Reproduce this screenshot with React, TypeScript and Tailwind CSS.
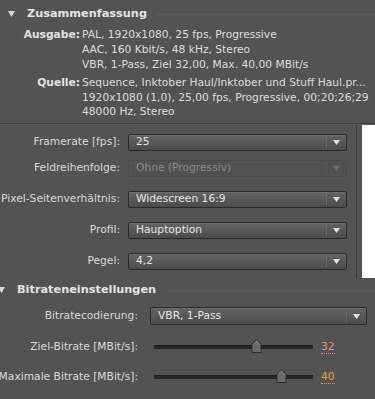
import React from "react";

const font = "font-['Lucida_Grande','DejaVu_Sans',sans-serif]";

function SectionHeader({ title, indent }: { title: string; indent: string }) {
  return (
    <div className={`flex items-center h-[14px] ${indent}`}>
      <svg width="7" height="6" viewBox="0 0 7 6" className="shrink-0">
        <path d="M0 0 H7 L3.5 6 Z" fill="#d6d6d6" />
      </svg>
      <span className="ml-[12px] text-[11.3px] font-bold text-[#e4e4e4] whitespace-nowrap">{title}</span>
      <div className="ml-[10px] flex-1 h-px bg-[#3c3c3c] border-b border-[#5e5e5e]" />
    </div>
  );
}

function Select({ value, disabled, className }: { value: string; disabled?: boolean; className: string }) {
  return (
    <div
      className={`flex items-center rounded-[2px] border ${
        disabled
          ? "border-[#4a4a4a] bg-[#515151] text-[#8c8c8c]"
          : "border-[#2a2a2a] bg-gradient-to-b from-[#646464] to-[#4c4c4c] text-[#e6e6e6] shadow-[inset_0_1px_0_#6e6e6e]"
      } ${className}`}
    >
      <span className="flex-1 pl-[7px] whitespace-nowrap">{value}</span>
      <div className={`w-px h-[11px] ${disabled ? "bg-[#5a5a5a]" : "bg-[#3a3a3a] border-r border-[#6a6a6a]"}`} />
      <svg width="7" height="5" viewBox="0 0 7 5" className="mx-[6px]">
        <path d="M0 0 H7 L3.5 5 Z" fill={disabled ? "#6e6e6e" : "#e4e4e4"} />
      </svg>
    </div>
  );
}

function Row({ label, children, labelWidth }: { label: string; children: React.ReactNode; labelWidth: string }) {
  return (
    <div className="flex items-center">
      <div className={`${labelWidth} shrink-0 text-right whitespace-nowrap text-[#dadada] flex justify-end`}>{label}</div>
      {children}
    </div>
  );
}

function Slider({ pos, value }: { pos: number; value: string }) {
  return (
    <div className="flex items-center ml-[16px]">
      <div className="relative w-[159px] h-[4px] bg-[#262626] border-t border-[#1c1c1c]">
        <svg
          width="11"
          height="15"
          viewBox="0 0 11 15"
          className="absolute top-[-7px]"
          style={{ left: pos - 5 }}
        >
          <path d="M1 5 L5.5 0.8 L10 5 V13.5 H1 Z" fill="#6a6a6a" stroke="#2c2c2c" />
          <path d="M2 5.5 L5.5 2 L9 5.5" fill="none" stroke="#888" strokeWidth="0.8" />
        </svg>
      </div>
      <span className="ml-[8px] text-[#e0a03c] border-b border-dotted border-[#e0a03c] leading-[12px]">{value}</span>
    </div>
  );
}

export default function App() {
  return (
    <div className={`w-[375px] h-[399px] overflow-hidden bg-[#535353] text-[10.7px] text-[#dedede] ${font}`}>
      <div className="pt-[7px] h-[124px] border-b border-[#3e3e3e]">
        <SectionHeader title="Zusammenfassung" indent="pl-[8px]" />
        <div className="mt-[6px] flex leading-[15px]">
          <div className="w-[80px] text-right font-bold text-[#e2e2e2]">Ausgabe:</div>
          <div className="pl-[2px] whitespace-nowrap">
            <div>PAL, 1920x1080, 25 fps, Progressive</div>
            <div>AAC, 160 Kbit/s, 48 kHz, Stereo</div>
            <div>VBR, 1-Pass, Ziel 32,00, Max. 40,00 MBit/s</div>
          </div>
        </div>
        <div className="mt-[4px] flex leading-[14.7px]">
          <div className="w-[80px] text-right font-bold text-[#e2e2e2]">Quelle:</div>
          <div className="pl-[2px] whitespace-nowrap">
            <div>Sequence, Inktober Haul/Inktober und Stuff Haul.pr...</div>
            <div>1920x1080 (1,0), 25,00 fps, Progressive, 00;20;26;29</div>
            <div>48000 Hz, Stereo</div>
          </div>
        </div>
      </div>

      <div className="flex h-[154px] border-t border-[#5c5c5c]">
        <div className="w-[357px] border-r border-[#3c3c3c] pt-[9px] flex flex-col">
          <Row label="Framerate [fps]:" labelWidth="w-[120px]">
            <Select value="25" className="ml-[8px] w-[219px] h-[17px]" />
          </Row>
          <div className="mt-[9px]">
            <Row label="Feldreihenfolge:" labelWidth="w-[120px]">
              <Select value="Ohne (Progressiv)" disabled className="ml-[8px] w-[219px] h-[17px]" />
            </Row>
          </div>
          <div className="flex flex-col gap-[14px] mt-[14px]">
            <Row label="Pixel-Seitenverhältnis:" labelWidth="w-[120px]">
              <Select value="Widescreen 16:9" className="ml-[8px] w-[219px] h-[17px]" />
            </Row>
            <Row label="Profil:" labelWidth="w-[120px]">
              <Select value="Hauptoption" className="ml-[8px] w-[219px] h-[17px]" />
            </Row>
            <Row label="Pegel:" labelWidth="w-[120px]">
              <Select value="4,2" className="ml-[8px] w-[219px] h-[17px]" />
            </Row>
          </div>
        </div>
        <div className="w-[5px] bg-[#535353]" />
        <div className="flex-1 bg-white" />
      </div>

      <div className="pt-[5px]">
        <SectionHeader title="Bitrateneinstellungen" indent="pl-0 ml-[-2px]" />
        <div className="mt-[10px]">
          <Row label="Bitratecodierung:" labelWidth="w-[138px]">
            <Select value="VBR, 1-Pass" className="ml-[12px] w-[217px] h-[18px]" />
          </Row>
        </div>
        <div className="mt-[14px]">
          <Row label="Ziel-Bitrate [MBit/s]:" labelWidth="w-[138px]">
            <Slider pos={102} value="32" />
          </Row>
        </div>
        <div className="mt-[14px]">
          <Row label="Maximale Bitrate [MBit/s]:" labelWidth="w-[138px]">
            <Slider pos={127} value="40" />
          </Row>
        </div>
      </div>
    </div>
  );
}
